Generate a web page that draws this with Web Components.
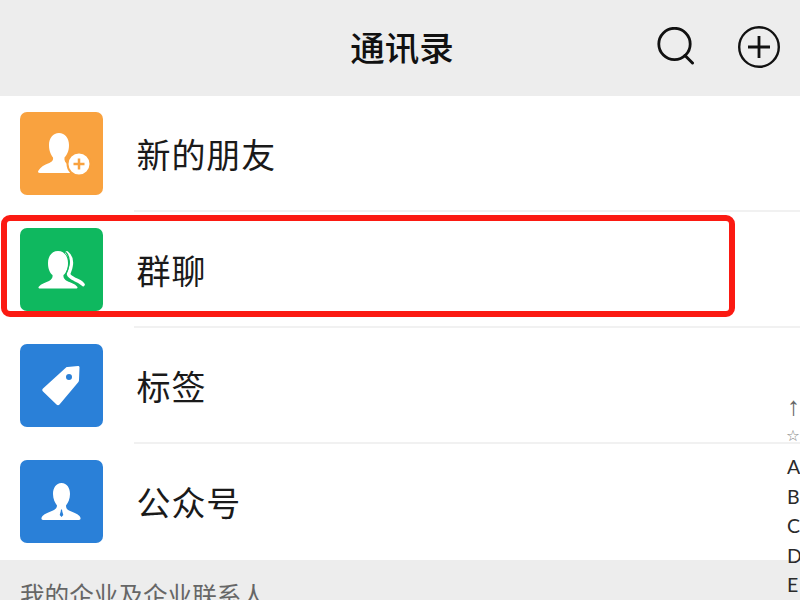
<!DOCTYPE html>
<html lang="zh"><head><meta charset="utf-8"><title>通讯录</title>
<style>html,body{margin:0;padding:0;background:#fff}body{width:800px;height:600px;overflow:hidden;position:relative;font-family:"Noto Sans CJK SC","Noto Sans",sans-serif}</style>
</head><body>
<contacts-page>
<top-bar title="通讯录"></top-bar>
<contact-row label="新的朋友" color="#f9a23f" icon="add"></contact-row>
<contact-row label="群聊" color="#0fb85f" icon="group"></contact-row>
<contact-row label="标签" color="#2a80d8" icon="tag"></contact-row>
<contact-row label="公众号" color="#2a80d8" icon="official" last></contact-row>
<section-head>我的企业及企业联系人</section-head>
</contacts-page>
<alpha-index></alpha-index>
<highlight-box></highlight-box>
<script>
const ICONS={
add:`<path fill="#fff" d="M39 21C45 21 49 26 49 33C49 39 47 43 44.500 45.500C44 49 45.500 51 48 52.500L50 61H20C18 61 17.500 60 18.500 58.500C20.500 55 24 53 28 51.500C32 50 33.500 48.500 33 45.500C31 43 29 39 29 33C29 26 33 21 39 21Z"/>
<circle cx="59" cy="52" r="11.500" fill="#fff" stroke="#f9a23f" stroke-width="2"/><circle cx="59" cy="52" r="9.500" fill="#fff"/><path stroke="#f9a23f" stroke-width="2.500" d="M59 46.500V57.500M53.500 52H64.500"/>`,
group:`<path fill="none" stroke="#fff" stroke-width="3.600" stroke-linecap="round" d="M47 25C50.500 28 52 33 51 38C50.500 42 49 44 48.500 46C49 48 51 49.500 55 51.500C59 53 61 54 63 56.500"/>
<path fill="#fff" d="M38 23C44 23 48 28 48 35C48 41 46 45 43.500 47C43 50 44.500 51.500 47 53C51 54.500 55 56 57 58.500C58 59.500 57.500 60.500 56 60.500H20C18.500 60.500 18 59.500 19 58.500C21 56 25 54.500 29 53C31.500 51.500 33 50 32.500 47C30 45 28 41 28 35C28 28 32 23 38 23Z"/>
<path fill="none" stroke="#0fb85f" stroke-width="1.200" d="M45.500 24C48.500 27 50 32 49 37C48.500 41 47 44 45.500 47C45.500 50 47 52 50 53.500"/>`,
tag:`<path fill="#fff" fill-rule="evenodd" d="M47.500 23L58 22C59 22 59.500 22.500 59.500 23.500L59 36C59 37 58.500 38 58 38.500L39.500 60.500C38.500 61.500 37.500 61.500 36.500 60.500L23 47.500C22 46.500 22 45.500 23 44.500L45.500 24C46 23.500 46.500 23 47.500 23ZM49 30A3 3 0 1 0 49 36A3 3 0 1 0 49 30Z"/>`,
official:`<path fill="#fff" d="M41.500 23C47 23 50 28 50 34C50 39 48 43 46 45.500C46 48 47 49.500 49 50.500C53 52 57 53.500 59.500 56C61 58 61 60 59 60H23C21 60 21 58 22.500 56C25 53.500 29 52 33 50.500C35 49.500 37 48 37 45.500C35 43 33 39 33 34C33 28 36 23 41.500 23Z"/>
<path fill="#2a80d8" d="M41 49.500H42L42.300 51.500L43.300 55L41.500 57L39.700 55L40.700 51.500Z"/>`
};
function def(name,css,html){customElements.define(name,class extends HTMLElement{connectedCallback(){if(this.shadowRoot)return;const r=this.attachShadow({mode:"open"});r.innerHTML=`<style>${css}</style>`+html(this)}})}
def("contacts-page",":host{display:flex;flex-direction:column;width:800px}",()=>"<slot></slot>");
def("top-bar",`:host{display:flex;align-items:center;justify-content:center;height:96px;background:#ededed;position:relative;color:#111}
h1{margin:0 0 4px 4px;font-size:34.500px;font-weight:500;line-height:1}
.acts{position:absolute;right:20px;top:26px;display:flex;gap:43px;align-items:flex-start}svg{display:block}`,
t=>`<h1>${t.getAttribute("title")}</h1><div class="acts">
<svg width="38" height="38" viewBox="0 0 38 38" fill="none" stroke="#111" style="margin-top:1px"><circle cx="17.500" cy="17" r="15.700" stroke-width="2.800"/><path d="M28 28.500L35.500 36" stroke-width="3" stroke-linecap="round"/></svg>
<svg width="42" height="42" viewBox="0 0 42 42" fill="none" stroke="#111"><circle cx="21" cy="21" r="19.800" stroke-width="2.400"/><path d="M21 10V32M10 21H32" stroke-width="2.800"/></svg></div>`);
def("contact-row",`:host{display:flex;align-items:center;height:116px;box-sizing:border-box;padding-left:20px;background:#fff;position:relative}
.ic{width:83px;height:83px;border-radius:7px;flex:none;margin-bottom:2px}svg{display:block}
span{margin-left:33.500px;font-size:34px;color:#1a1a1a;line-height:1;letter-spacing:.9px}
.d{position:absolute;left:134px;right:0;bottom:0;height:2px;background:#f1f1f1}`,
t=>`<div class="ic" style="background:${t.getAttribute("color")}"><svg width="83" height="83" viewBox="0 0 83 83">${ICONS[t.getAttribute("icon")]}</svg></div><span>${t.getAttribute("label")}</span>${t.hasAttribute("last")?"":'<div class="d"></div>'}`);
def("section-head",`:host{display:block;background:#ededed;height:60px;margin-top:-0.500px;padding:16px 0 0 20px;box-sizing:border-box;font-size:24.600px;color:#666;line-height:36px}`,()=>"<slot></slot>");
def("alpha-index",`:host{position:absolute;left:787px;top:392px;width:30px;display:flex;flex-direction:column;font-family:Lato,"Liberation Sans",sans-serif;color:#2a2a2a;font-size:19.500px}
div{height:29.500px;line-height:29px}.s{color:#888;font-family:"DejaVu Sans";font-size:15.500px;margin-left:-1px;height:31px;padding-top:1px;box-sizing:border-box}.a{height:29px;color:#666;font-family:"Liberation Sans";font-size:26px;opacity:.99}`,
()=>`<div class="a">↑</div><div class="s">☆</div><div>A</div><div>B</div><div>C</div><div>D</div><div>E</div>`);
def("highlight-box",`:host{position:absolute;left:1px;top:215px;width:734px;height:102px;box-sizing:border-box;border:6.500px solid #fb1a12;border-radius:9px}`,()=>"");
</script>
</body></html>
